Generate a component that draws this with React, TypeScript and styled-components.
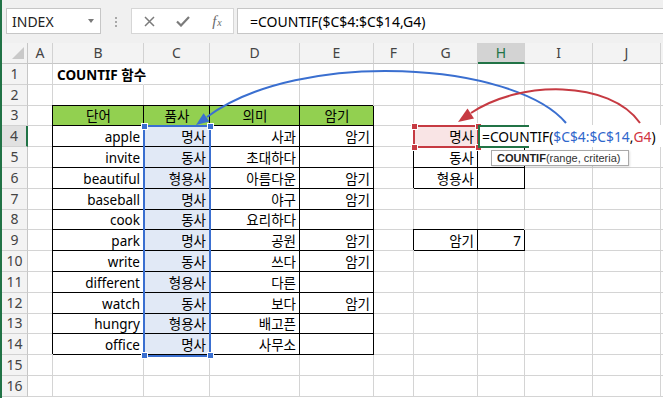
import React from 'react';
import styled, { createGlobalStyle, css } from 'styled-components';

const GlobalStyle = createGlobalStyle`
  html, body { margin: 0; padding: 0; background: #fff; overflow: hidden; }
  #root { width: 663px; height: 398px; }
`;

const UI_FONT = `"Noto Sans", "Noto Sans CJK KR", sans-serif`;
const GRID = '#d4d4d4';
const BLUE = '#3a6fd0';
const RED = '#c63a42';
const GREEN = '#217346';

const Window = styled.div`
  position: relative;
  width: 663px;
  height: 398px;
  box-sizing: border-box;
  overflow: hidden;
  border-left: 2px solid ${GREEN};
  background: #fff;
  font-family: ${UI_FONT};
`;

/* ---------- formula bar ---------- */
const Toolbar = styled.div`
  display: flex;
  align-items: flex-start;
  height: 43px;
  box-sizing: border-box;
  padding: 8px 0 0 4px;
  background: #f0f0f0;
`;

const NameBox = styled.div`
  position: relative;
  display: flex;
  align-items: center;
  width: 95px;
  height: 26px;
  box-sizing: border-box;
  padding-left: 5px;
  background: #fff;
  border: 1px solid #c6c6c6;
  font-size: 14px;
  color: #222;
`;

const DropArrow = styled.span`
  margin-left: auto;
  margin-right: 6px;
  width: 0;
  height: 0;
  border-left: 3.5px solid transparent;
  border-right: 3.5px solid transparent;
  border-top: 4px solid #7a7a7a;
`;

const DotSep = styled.span`
  margin: 9px 0 0 14px;
  width: 0;
  height: 10px;
  border-left: 2px dotted #a8a8a8;
`;

const FxButtons = styled.div`
  display: grid;
  grid-template-columns: repeat(3, 34px);
  align-items: center;
  justify-items: center;
  margin-left: 14px;
  width: 103px;
  height: 26px;
  box-sizing: border-box;
  background: #fff;
  border: 1px solid #d6d6d6;
`;

const FxGlyph = styled.span`
  font-family: "Liberation Serif", serif;
  font-style: italic;
  color: #6a6a6a;
  font-size: 15px;
  line-height: 1;
  & > small {
    font-size: 10px;
    margin-left: 1px;
  }
`;

const FormulaInput = styled.div`
  flex: 1;
  display: flex;
  align-items: center;
  margin-left: 3px;
  height: 26px;
  box-sizing: border-box;
  padding-left: 12px;
  background: #fff;
  border: 1px solid #c6c6c6;
  border-right: none;
  font-size: 14px;
  color: #000;
  white-space: nowrap;
`;

/* ---------- sheet grid ---------- */
const Sheet = styled.div`
  display: grid;
  grid-template-columns: 26px 25px 91px 66px 90px 74px 40px 64px 47px 68px 68px 1fr;
  grid-template-rows: 21px;
  grid-auto-rows: 20.8px;
`;

const Corner = styled.div`
  box-sizing: border-box;
  display: flex;
  align-items: flex-end;
  justify-content: flex-end;
  padding: 0 3px 4px 0;
  background: #f3f3f3;
  border-right: 1px solid #c6c6c6;
  border-bottom: 1px solid #c6c6c6;
`;

const CornerTriangle = styled.span`
  width: 0;
  height: 0;
  border-left: 12px solid transparent;
  border-bottom: 12px solid #c9c9c9;
`;

const ColHead = styled.div<{ $sel?: boolean }>`
  box-sizing: border-box;
  display: flex;
  align-items: center;
  justify-content: center;
  background: ${(p) => (p.$sel ? '#d3d3d3' : '#f3f3f3')};
  border-right: 1px solid #d2d2d2;
  border-bottom: ${(p) => (p.$sel ? `2px solid ${GREEN}` : '1px solid #c6c6c6')};
  color: ${(p) => (p.$sel ? GREEN : '#444')};
  font-size: 14px;
  line-height: 1;
`;

const RowHead = styled.div<{ $sel?: boolean }>`
  box-sizing: border-box;
  display: flex;
  align-items: center;
  justify-content: center;
  background: ${(p) => (p.$sel ? '#e1e1e1' : '#f3f3f3')};
  border-right: ${(p) => (p.$sel ? `2px solid ${GREEN}` : '1px solid #c6c6c6')};
  border-bottom: 1px solid #d2d2d2;
  color: #444;
  font-size: 14px;
  line-height: 1;
`;

type Align = 'left' | 'center' | 'right';

const Cell = styled.div<{
  $align?: Align;
  $bg?: string;
  $box?: boolean;
  $bold?: boolean;
  $noRight?: boolean;
}>`
  box-sizing: border-box;
  display: flex;
  align-items: flex-end;
  justify-content: ${(p) =>
    p.$align === 'center' ? 'center' : p.$align === 'left' ? 'flex-start' : 'flex-end'};
  padding: 0 3px 1px 4px;
  border-right: 1px solid
    ${(p) => (p.$noRight ? 'transparent' : p.$box ? '#000' : GRID)};
  border-bottom: 1px solid ${(p) => (p.$box ? '#000' : GRID)};
  ${(p) =>
    p.$box &&
    css`
      box-shadow: -1px -1px 0 #000;
    `}
  background: ${(p) => p.$bg ?? 'transparent'};
  font-size: 13.5px;
  line-height: 16px;
  font-weight: ${(p) => (p.$bold ? 700 : 400)};
  color: #000;
  white-space: nowrap;
`;

/* ---------- overlays ---------- */
const RangeFrame = styled.div<{ $color: string }>`
  position: absolute;
  box-sizing: border-box;
  border: 2px solid ${(p) => p.$color};
  pointer-events: none;
  z-index: 3;
`;

const Handle = styled.span<{ $color: string; $x: 'l' | 'r'; $y: 't' | 'b' }>`
  position: absolute;
  width: 5px;
  height: 5px;
  background: ${(p) => p.$color};
  border: 1px solid #fff;
  ${(p) => (p.$x === 'l' ? 'left: -4.5px;' : 'right: -4.5px;')}
  ${(p) => (p.$y === 't' ? 'top: -4.5px;' : 'bottom: -4.5px;')}
`;

const EditBox = styled.div`
  position: absolute;
  display: flex;
  align-items: flex-end;
  padding: 0 0 2px 2px;
  box-sizing: border-box;
  background: #fff;
  font-size: 13.8px;
  line-height: 16px;
  color: #000;
  white-space: nowrap;
  z-index: 4;
`;

const Ref = styled.span<{ $c: string }>`
  color: ${(p) => p.$c};
`;

const ActiveFrame = styled.div`
  position: absolute;
  box-sizing: border-box;
  border: 2px solid ${GREEN};
  border-right: none;
  z-index: 5;
`;

const Tooltip = styled.div`
  position: absolute;
  box-sizing: border-box;
  display: flex;
  align-items: center;
  padding-left: 5px;
  background: #fff;
  border: 1px solid #a9a9a9;
  box-shadow: 1px 1px 2px rgba(0, 0, 0, 0.12);
  font-family: "Liberation Sans", Arial, sans-serif;
  font-size: 11px;
  color: #333;
  white-space: nowrap;
  z-index: 7;
  & > b {
    color: #222;
  }
`;

const ArrowLayer = styled.svg`
  position: absolute;
  left: -2px;
  top: 0;
  pointer-events: none;
  z-index: 6;
`;

/* ---------- data ---------- */
const COLS = ['A', 'B', 'C', 'D', 'E', 'F', 'G', 'H', 'I', 'J', ''];

const TABLE: string[][] = [
  ['단어', '품사', '의미', '암기'],
  ['apple', '명사', '사과', '암기'],
  ['invite', '동사', '초대하다', ''],
  ['beautiful', '형용사', '아름다운', '암기'],
  ['baseball', '명사', '야구', '암기'],
  ['cook', '동사', '요리하다', ''],
  ['park', '명사', '공원', '암기'],
  ['write', '동사', '쓰다', '암기'],
  ['different', '형용사', '다른', ''],
  ['watch', '동사', '보다', '암기'],
  ['hungry', '형용사', '배고픈', ''],
  ['office', '명사', '사무소', ''],
];

const SIDE: Record<number, [string, string]> = {
  4: ['명사', ''],
  5: ['동사', ''],
  6: ['형용사', ''],
  9: ['암기', '7'],
};

type Spec = {
  t?: string;
  a?: Align;
  bg?: string;
  box?: boolean;
  bold?: boolean;
  noRight?: boolean;
};

function spec(col: string, row: number): Spec {
  if (row === 1 && col === 'B') return { t: 'COUNTIF 함수', a: 'left', bold: true, noRight: true };
  const ti = ['B', 'C', 'D', 'E'].indexOf(col);
  if (ti >= 0 && row >= 3 && row <= 14) {
    return {
      t: TABLE[row - 3][ti],
      a: row === 3 ? 'center' : 'right',
      box: true,
      bg: row === 3 ? '#92d050' : col === 'C' ? '#e1e9f6' : undefined,
    };
  }
  const si = ['G', 'H'].indexOf(col);
  if (si >= 0 && SIDE[row]) {
    return {
      t: SIDE[row][si],
      a: 'right',
      box: true,
      bg: col === 'G' && row === 4 ? '#f9e4e5' : undefined,
    };
  }
  return {};
}

const ROWS = Array.from({ length: 16 }, (_, i) => i + 1);

function FrameHandles({ color }: { color: string }) {
  return (
    <>
      <Handle $color={color} $x="l" $y="t" />
      <Handle $color={color} $x="r" $y="t" />
      <Handle $color={color} $x="l" $y="b" />
      <Handle $color={color} $x="r" $y="b" />
    </>
  );
}

export default function App() {
  return (
    <>
      <GlobalStyle />
      <Window>
        <Toolbar>
          <NameBox>
            INDEX
            <DropArrow />
          </NameBox>
          <DotSep />
          <FxButtons>
            <svg width="11" height="11" viewBox="0 0 11 11">
              <path d="M1 1 L10 10 M10 1 L1 10" stroke="#7b7b7b" strokeWidth="1.5" fill="none" />
            </svg>
            <svg width="14" height="11" viewBox="0 0 14 11">
              <path d="M1 5.5 L5 9.5 L13 1" stroke="#7b7b7b" strokeWidth="2.2" fill="none" />
            </svg>
            <FxGlyph>
              f<small>x</small>
            </FxGlyph>
          </FxButtons>
          <FormulaInput>=COUNTIF($C$4:$C$14,G4)</FormulaInput>
        </Toolbar>

        <Sheet>
          <Corner>
            <CornerTriangle />
          </Corner>
          {COLS.map((c, i) => (
            <ColHead key={`h${i}`} $sel={c === 'H'}>
              {c}
            </ColHead>
          ))}
          {ROWS.map((r) => (
            <React.Fragment key={r}>
              <RowHead $sel={r === 4}>{r}</RowHead>
              {COLS.map((c, i) => {
                const s = spec(c, r);
                return (
                  <Cell
                    key={`${r}-${i}`}
                    $align={s.a}
                    $bg={s.bg}
                    $box={s.box}
                    $bold={s.bold}
                    $noRight={s.noRight}
                  >
                    {s.t}
                  </Cell>
                );
              })}
            </React.Fragment>
          ))}
        </Sheet>

        {/* range reference C4:C14 */}
        <RangeFrame $color={BLUE} style={{ left: 141, top: 125.4, width: 68, height: 231.3 }}>
          <FrameHandles color={BLUE} />
        </RangeFrame>

        {/* criteria reference G4 */}
        <RangeFrame $color={RED} style={{ left: 411, top: 125.4, width: 66, height: 22.8 }}>
          <FrameHandles color={RED} />
        </RangeFrame>

        {/* in-cell editing of H4 */}
        <EditBox style={{ left: 478, top: 125.4, width: 185, height: 22 }}>
          =COUNTIF(<Ref $c="#2f66cc">$C$4:$C$14</Ref>,<Ref $c="#d0343e">G4</Ref>)
        </EditBox>
        <ActiveFrame style={{ left: 476, top: 125.4, width: 51, height: 22.8 }} />

        <Tooltip style={{ left: 489, top: 150, width: 138, height: 16 }}>
          <b>COUNTIF</b>(range, criteria)
        </Tooltip>

        <ArrowLayer width="663" height="398" viewBox="0 0 663 398">
          <path d="M566 123 C 515 62 300 48 207 117" stroke="#3a6fd0" strokeWidth="2" fill="none" />
          <polygon points="196,125 209.4,121.5 203.6,113.3" fill="#3a6fd0" />
          <path d="M640 123 C 610 80 520 80 471 113" stroke="#c63a42" strokeWidth="2" fill="none" />
          <polygon points="458,122 474,118.5 467.5,108.5" fill="#c63a42" />
        </ArrowLayer>
      </Window>
    </>
  );
}
